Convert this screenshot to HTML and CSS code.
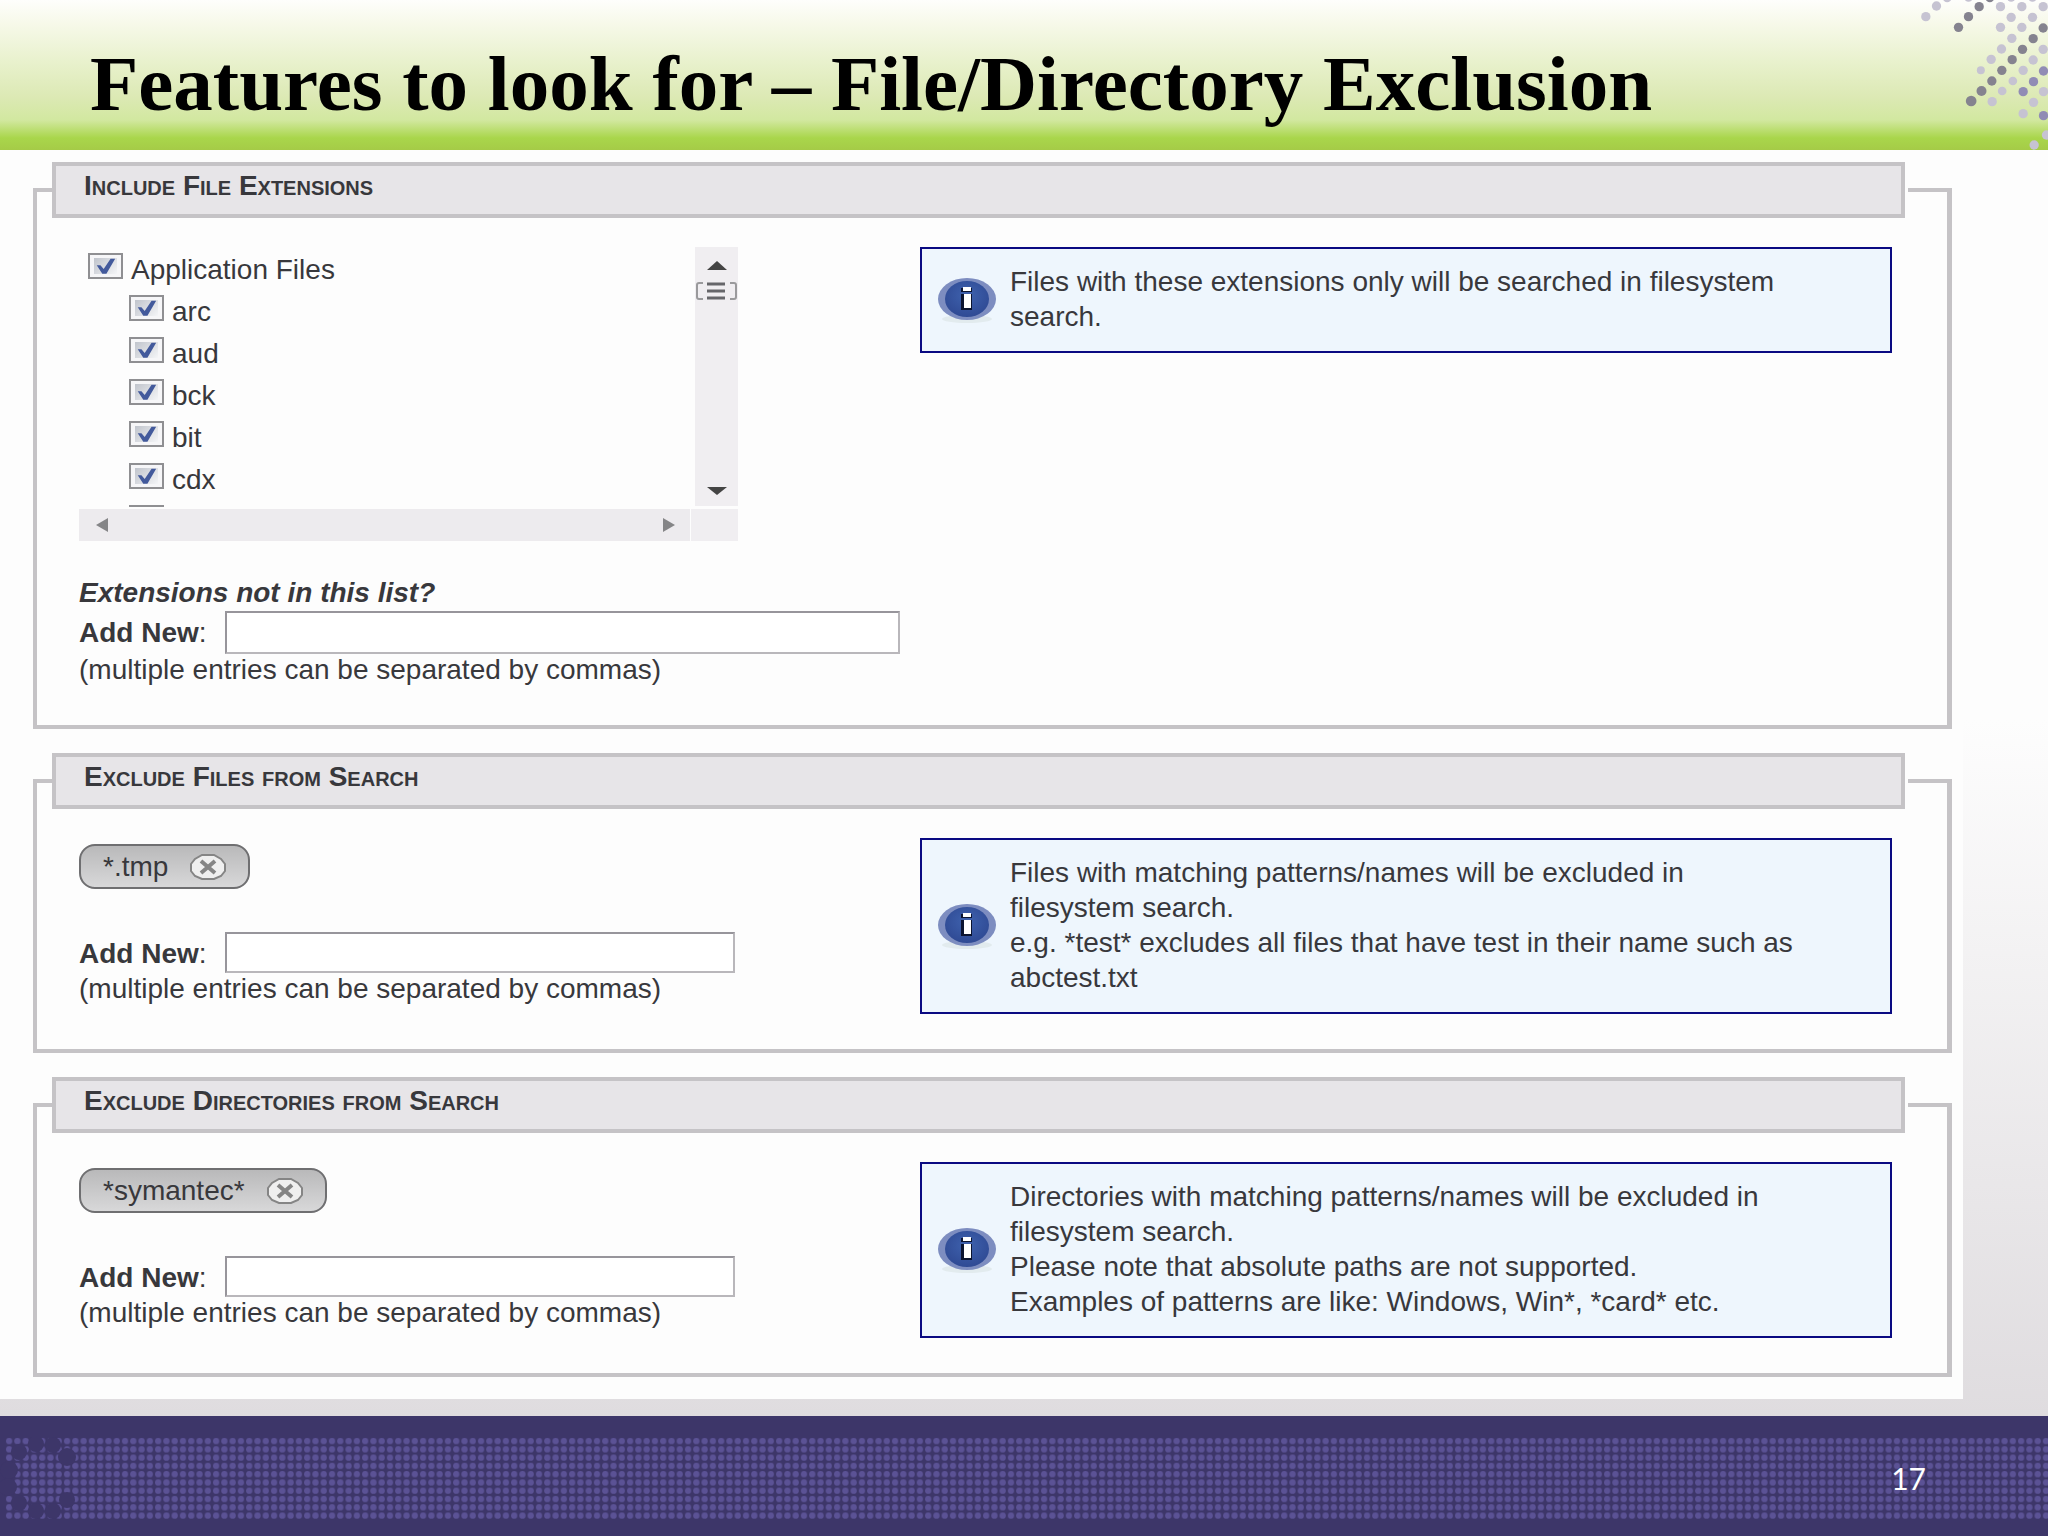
FILE: index.html
```html
<!DOCTYPE html>
<html lang="en">
<head>
    <meta charset="UTF-8">
    <meta name="viewport" content="width=device-width, initial-scale=1.0">
    <title>Features to look for – File/Directory Exclusion</title>
    <link rel="stylesheet" href="styles.css">
</head>
<body>

<!-- Shared symbols -->
<svg class="symbols" aria-hidden="true">
    <defs>
        <radialGradient id="infoFill" cx="50%" cy="40%" r="60%">
            <stop offset="0" stop-color="#3f62ae"/>
            <stop offset="1" stop-color="#2f4a94"/>
        </radialGradient>
        <symbol id="info" viewBox="0 0 60 50" preserveAspectRatio="none">
            <ellipse cx="30" cy="45" rx="25" ry="4" fill="#e2ebee"/>
            <ellipse cx="30" cy="25" rx="29" ry="21" fill="#7d8dc0"/>
            <ellipse cx="30" cy="25" rx="22" ry="18" fill="url(#infoFill)"/>
            <path d="M24 14h11v4H24zM24 20h11v16H24z" fill="#0b1430"/>
            <path d="M26 13h8v4h-8zM27 20h7v14h-7z" fill="#fff"/>
        </symbol>
        <symbol id="close" viewBox="0 0 36 26" preserveAspectRatio="none">
            <path d="M12 1h12l7 4 4 5v7l-4 5-7 3H12l-7-3-4-5v-7l4-5z" fill="#efefef" stroke="#858585" stroke-width="2"/>
            <path d="M11 7l14 12M25 7L11 19" stroke="#858585" stroke-width="4"/>
        </symbol>
    </defs>
</svg>

<header class="banner">
    <h1>Features to look for – File/Directory Exclusion</h1>
    <svg class="banner-dots" viewBox="940 0 404 450" aria-hidden="true">
        <g fill="#c6c3d2">
            <circle cx="978" cy="50" r="14"/><circle cx="1010" cy="18" r="14"/><circle cx="1042" cy="-6" r="13"/>
            <circle cx="1106" cy="-8" r="13"/><circle cx="1234" cy="-8" r="13"/><circle cx="1298" cy="-8" r="13"/>
            <circle cx="1202" cy="20" r="14"/><circle cx="1266" cy="20" r="14"/><circle cx="1330" cy="20" r="14"/>
            <circle cx="1234" cy="52" r="14"/><circle cx="1298" cy="52" r="14"/>
            <circle cx="1202" cy="82" r="14"/><circle cx="1266" cy="82" r="14"/>
            <circle cx="1236" cy="115" r="14"/><circle cx="1205" cy="147" r="14"/><circle cx="1174" cy="178" r="14"/><circle cx="1143" cy="211" r="12"/>
            <circle cx="1330" cy="148" r="14"/><circle cx="1300" cy="180" r="14"/><circle cx="1270" cy="211" r="14"/>
            <circle cx="1239" cy="243" r="13"/><circle cx="1207" cy="273" r="13"/><circle cx="1177" cy="305" r="14"/>
            <circle cx="1331" cy="275" r="14"/><circle cx="1301" cy="307" r="14"/><circle cx="1270" cy="341" r="14"/>
            <circle cx="1340" cy="405" r="14"/><circle cx="1303" cy="435" r="14"/>
        </g>
        <g fill="#85838f">
            <circle cx="1076" cy="82" r="14"/><circle cx="1106" cy="50" r="14"/><circle cx="1138" cy="20" r="14"/><circle cx="1170" cy="-6" r="13"/>
            <circle cx="1330" cy="84" r="14"/><circle cx="1300" cy="116" r="14"/><circle cx="1268" cy="148" r="14"/><circle cx="1237" cy="179" r="14"/>
            <circle cx="1206" cy="211" r="14"/><circle cx="1176" cy="243" r="14"/><circle cx="1145" cy="273" r="15"/><circle cx="1114" cy="303" r="16"/>
        </g>
        <g fill="#918cb5">
            <circle cx="1331" cy="213" r="14"/><circle cx="1301" cy="245" r="14"/><circle cx="1270" cy="275" r="14"/><circle cx="1331" cy="347" r="14"/>
        </g>
    </svg>
</header>

<div class="backdrop">
<main class="sheet">

    <!-- Include extensions -->
    <fieldset class="panel">
        <legend>Include File Extensions</legend>
        <div class="columns">
            <div>
                <div class="listbox">
                    <ul class="ext-list">
                        <li><label><input type="checkbox" checked>Application Files</label></li>
                        <li class="child"><label><input type="checkbox" checked>arc</label></li>
                        <li class="child"><label><input type="checkbox" checked>aud</label></li>
                        <li class="child"><label><input type="checkbox" checked>bck</label></li>
                        <li class="child"><label><input type="checkbox" checked>bit</label></li>
                        <li class="child"><label><input type="checkbox" checked>cdx</label></li>
                        <li class="child"><input type="checkbox" aria-label="Next extension"></li>
                    </ul>
                    <div class="scroll-v">
                        <svg width="20" height="9" viewBox="0 0 20 9"><path d="M10 0L20 9H0z" fill="#444"/></svg>
                        <svg class="thumb" width="41" height="18" viewBox="0 0 41 18">
                            <path d="M7 1H3Q1 1 1 3v12q0 2 2 2h4M34 1h4q2 0 2 2v12q0 2-2 2h-4" fill="none" stroke="#9a9a9c" stroke-width="2"/>
                            <path d="M11 2h18M11 9h18M11 16h18" stroke="#66666a" stroke-width="3"/>
                        </svg>
                        <svg class="down" width="20" height="8" viewBox="0 0 20 8"><path d="M10 8L0 0h20z" fill="#444"/></svg>
                    </div>
                    <div class="scroll-h">
                        <svg width="12" height="14" viewBox="0 0 12 14"><path d="M0 7L12 0v14z" fill="#858587"/></svg>
                        <svg width="12" height="14" viewBox="0 0 12 14"><path d="M12 7L0 0v14z" fill="#858587"/></svg>
                    </div>
                    <div class="corner"></div>
                </div>
                <p class="question">Extensions not in this list?</p>
                <div class="add-row wide">
                    <label for="newExt"><b>Add New</b>:</label>
                    <input type="text" id="newExt">
                </div>
                <p class="note">(multiple entries can be separated by commas)</p>
            </div>
            <div class="info">
                <svg class="info-icon"><use href="#info"/></svg>
                <p>Files with these extensions only will be searched in filesystem<br>search.</p>
            </div>
        </div>
    </fieldset>

    <!-- Exclude files -->
    <fieldset class="panel">
        <legend>Exclude Files from Search</legend>
        <div class="columns">
            <div>
                <div class="chip">
                    <span>*.tmp</span>
                    <button type="button" aria-label="Remove"><svg><use href="#close"/></svg></button>
                </div>
                <div class="add-row">
                    <label for="newFile"><b>Add New</b>:</label>
                    <input type="text" id="newFile">
                </div>
                <p class="note">(multiple entries can be separated by commas)</p>
            </div>
            <div class="info">
                <svg class="info-icon"><use href="#info"/></svg>
                <p>Files with matching patterns/names will be excluded in<br>filesystem search.<br>e.g. *test* excludes all files that have test in their name such as<br>abctest.txt</p>
            </div>
        </div>
    </fieldset>

    <!-- Exclude directories -->
    <fieldset class="panel">
        <legend>Exclude Directories from Search</legend>
        <div class="columns">
            <div>
                <div class="chip">
                    <span>*symantec*</span>
                    <button type="button" aria-label="Remove"><svg><use href="#close"/></svg></button>
                </div>
                <div class="add-row">
                    <label for="newDir"><b>Add New</b>:</label>
                    <input type="text" id="newDir">
                </div>
                <p class="note">(multiple entries can be separated by commas)</p>
            </div>
            <div class="info">
                <svg class="info-icon"><use href="#info"/></svg>
                <p>Directories with matching patterns/names will be excluded in<br>filesystem search.<br>Please note that absolute paths are not supported.<br>Examples of patterns are like: Windows, Win*, *card* etc.</p>
            </div>
        </div>
    </fieldset>

</main>
</div>

<footer class="footer">
    <svg class="footer-dots" aria-hidden="true">
        <defs>
            <pattern id="dots" x="5" y="0" width="8.28" height="8.28" patternUnits="userSpaceOnUse">
                <circle cx="4.1" cy="4.1" r="3.1" fill="#5b5295"/>
            </pattern>
        </defs>
        <rect x="5" y="0" width="100%" height="82.8" fill="url(#dots)"/>
        <g fill="#3d3669">
            <circle cx="36" cy="7" r="8"/><circle cx="53" cy="8" r="8"/><circle cx="19" cy="15" r="8"/><circle cx="67" cy="20" r="9"/>
            <circle cx="9" cy="33" r="9"/><circle cx="8" cy="50" r="9"/><circle cx="19" cy="66" r="8"/><circle cx="67" cy="63" r="8"/>
            <circle cx="36" cy="74" r="8"/><circle cx="53" cy="74" r="8"/>
        </g>
    </svg>
    <span class="page-number">17</span>
</footer>

</body>
</html>
```
FILE: styles.css
```css
* {
    box-sizing: border-box;
}

body {
    margin: 0;
    min-height: 100vh;
    display: flex;
    flex-direction: column;
    font-family: "Liberation Sans", Arial, sans-serif;
    font-size: 28px;
    color: #38383c;
    background-color: #fdfdfd;
}

p, ul {
    margin: 0;
    padding: 0;
}

svg {
    display: block;
}

.symbols {
    position: absolute;
    width: 0;
    height: 0;
}

/* Title banner */
.banner {
    position: relative;
    height: 150px;
    padding-left: 90px;
    overflow: hidden;
    background: linear-gradient(#fefefc 0%, #f7f9ea 15%, #e8f1cc 42%, #dce9b4 65%, #d2e8a0 80%, #a9d64b 92%, #a5cb47 100%);
}

.banner h1 {
    margin: 0;
    font-family: "Liberation Serif", "Times New Roman", serif;
    font-size: 79px;
    line-height: 168px;
    color: #000;
    white-space: nowrap;
}

.banner-dots {
    position: absolute;
    top: 0;
    right: 0;
    width: 135px;
    height: 150px;
}

.backdrop {
    flex: 1;
    padding: 0 85px 16px 0;
    background: linear-gradient(#fdfdfd 45%, #dfdcdf 100%);
}

.sheet {
    padding: 12px 11px 22px 33px;
    background-color: #fdfdfd;
}

/* Panels */
.panel {
    margin: 0 0 24px;
    padding: 29px 55px 35px 42px;
    border: 4px solid #c5c3c6;
    border-right-width: 5px;
    min-width: 0;
}

.panel:last-child {
    margin-bottom: 0;
}

.panel legend {
    width: calc(100% + 40px);
    height: 56px;
    margin-left: -27px;
    padding: 0 28px;
    border: 4px solid #c5c3c6;
    background-color: #e7e5e8;
    box-shadow: 3px 0 0 #fdfdfd;
    font-size: 28px;
    font-weight: bold;
    font-variant: small-caps;
    line-height: 40px;
}

.columns {
    display: grid;
    grid-template-columns: 841fr 972fr;
    align-items: start;
}

/* Extension list with its scrollbars */
.listbox {
    display: grid;
    grid-template-columns: 1fr 43px;
    grid-template-rows: 262px 32px;
    width: 659px;
}

.ext-list {
    list-style: none;
    margin-bottom: 2px;
    padding: 6px 0 0 9px;
    overflow: hidden;
}

.ext-list li {
    height: 42px;
}

.ext-list .child {
    padding-left: 41px;
}

.ext-list label {
    display: flex;
    gap: 8px;
    line-height: 34px;
}

.ext-list input {
    appearance: none;
    width: 35px;
    height: 26px;
    margin: 0;
    padding: 3px 4px;
    border: 2px solid #8f8f92;
    background: linear-gradient(135deg, #c0c4cc, #f4f5f7) content-box, #f6f6f8;
}

.ext-list input:checked::before {
    content: "";
    display: block;
    height: 16px;
    background-color: #435a9c;
    clip-path: polygon(12% 45%, 28% 45%, 42% 68%, 72% 5%, 92% 5%, 54% 98%, 36% 98%);
}

.scroll-v {
    display: flex;
    flex-direction: column;
    align-items: center;
    margin-bottom: 3px;
    padding: 14px 0 11px;
    background-color: #f0eef1;
}

.scroll-v .thumb {
    margin-top: 12px;
}

.scroll-v .down {
    margin-top: auto;
}

.scroll-h {
    display: flex;
    align-items: center;
    justify-content: space-between;
    margin-right: 5px;
    padding: 0 15px 0 17px;
    background-color: #edebee;
}

.corner {
    margin-left: -4px;
    background-color: #f0eef1;
}

.question {
    margin: 36px 0 3px;
    font-weight: bold;
    font-style: italic;
    line-height: 31px;
}

.add-row {
    display: flex;
    width: 656px;
    height: 41px;
    line-height: 43px;
}

.add-row.wide {
    width: 821px;
    height: 43px;
}

.add-row label {
    width: 146px;
}

.add-row input {
    flex: 1;
    min-width: 0;
    border: 2px solid #b9b7bb;
    border-top-color: #97959b;
    border-left-color: #97959b;
    background-color: #fff;
    font: inherit;
}

.note {
    margin-bottom: 4px;
    line-height: 32px;
}

/* Removable pattern */
.chip {
    display: inline-flex;
    align-items: center;
    gap: 22px;
    height: 45px;
    margin: 6px 0 43px;
    padding: 0 22px;
    border: 2px solid #6f6f71;
    border-radius: 16px;
    background: linear-gradient(#b9b9ba, #d8d8d9);
    vertical-align: top;
}

.chip button {
    padding: 0;
    border: none;
    background: none;
    cursor: pointer;
}

.chip svg {
    width: 36px;
    height: 26px;
}

/* Help box */
.info {
    display: flex;
    align-items: center;
    gap: 13px;
    padding: 15px 14px 17px 15px;
    border: 2px solid #0a0a82;
    background-color: #eef6fd;
    line-height: 35px;
}

.info-icon {
    flex: none;
    width: 60px;
    height: 50px;
}

/* Footer */
.footer {
    position: relative;
    display: flex;
    align-items: center;
    justify-content: flex-end;
    height: 120px;
    padding: 4px 122px 0 0;
    background-color: #3d3669;
}

.footer-dots {
    position: absolute;
    top: 21px;
    left: 0;
    width: 100%;
    height: 83px;
}

.page-number {
    position: relative;
    font-family: Lato, Carlito, sans-serif;
    font-size: 30px;
    color: #fff;
}
```
